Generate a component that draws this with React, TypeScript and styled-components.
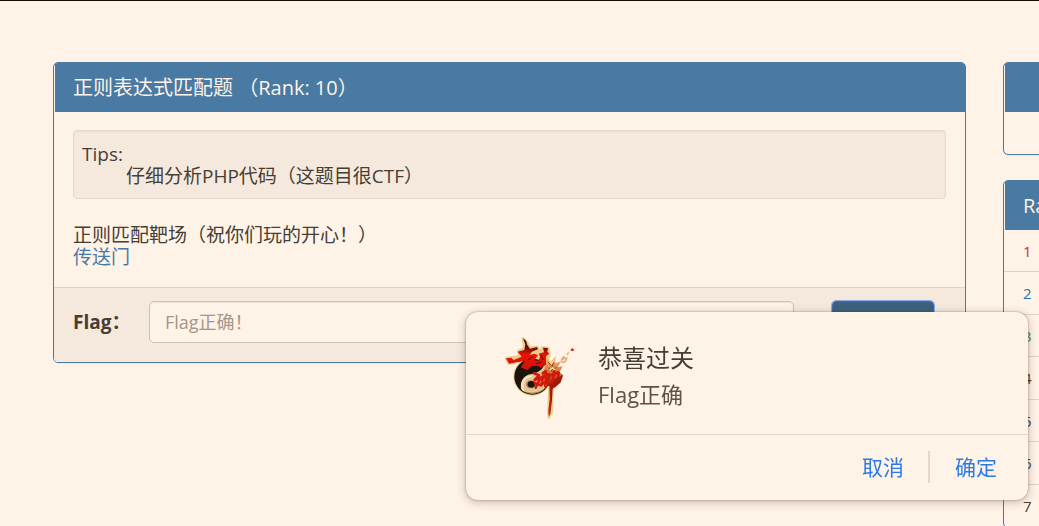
import React from "react";
import styled, { createGlobalStyle } from "styled-components";

const uiFont = `"Open Sans", "Noto Sans CJK SC", sans-serif`;

const GlobalStyle = createGlobalStyle`
  *, *::before, *::after { box-sizing: border-box; }
  body {
    margin: 0;
    background: #fff2e6;
    color: #463d34;
    font-family: ${uiFont};
    font-size: 19px;
    line-height: 22px;
    overflow: hidden;
  }
`;

const Page = styled.div`
  min-height: 100vh;
  border-top: 1px solid #1a0a04;
  padding: 61px 0 0 53px;
`;

const Columns = styled.div`
  display: grid;
  grid-template-columns: minmax(0, 1fr) 36px;
  gap: 37px;
  align-items: start;
`;

const Sidebar = styled.aside`
  display: flex;
  flex-direction: column;
  gap: 25px;
  width: 300px;
`;

const Panel = styled.section`
  border: 1px solid #487aa4;
  border-radius: 5px;
  overflow: hidden;
  box-shadow: 0 1px 1px rgba(0, 0, 0, 0.05);
`;

const PanelHeading = styled.h2`
  margin: 0 0 0 1px;
  padding: 13px 18px;
  min-height: 49px;
  background: #487aa4;
  color: #fff2e6;
  font-size: 20px;
  font-weight: 400;
  line-height: 23px;
  white-space: pre;
`;

const PanelBody = styled.div`
  min-height: 42px;
  padding: 18px 19px 19px;
`;

const Well = styled.div`
  margin-bottom: 25px;
  padding: 12px 8px 11px;
  border: 1px solid #e5d9cd;
  border-radius: 4px;
  background: #f5e9dd;
  box-shadow: inset 0 1px 1px rgba(0, 0, 0, 0.05);
`;

const Tip = styled.div`
  padding-left: 44px;
`;

const Link = styled.a`
  display: block;
  width: fit-content;
  color: #487aa4;
  text-decoration: none;
`;

const PanelFooter = styled.form`
  display: flex;
  align-items: center;
  padding: 13px 31px 19px 19px;
  border-top: 1px solid #dfd3c7;
  background: #f5e9dd;
`;

const FlagLabel = styled.label`
  flex: 0 0 76px;
  font-weight: 700;
`;

const FlagInput = styled.input`
  flex: 1;
  min-width: 0;
  height: 42px;
  padding: 0 15px;
  border: 1px solid #cdc1b5;
  border-radius: 5px;
  background: #fff2e6;
  box-shadow: inset 0 1px 1px rgba(0, 0, 0, 0.07);
  color: #463d34;
  font: 18px ${uiFont};
  &::placeholder { color: #a39789; opacity: 1; }
`;

const SubmitButton = styled.button`
  width: 102px;
  height: 42px;
  margin-left: 38px;
  border: 1px solid #4666a8;
  border-radius: 4px;
  outline: 1px solid #8da5e2;
  background: #3c617f;
  color: #fff2e6;
  font: 18px ${uiFont};
`;

const RankTable = styled.table`
  width: 100%;
  border-collapse: separate;
  border-spacing: 0;
  font-size: 15px;
  line-height: 20px;
`;

const RankRow = styled.tr`
  height: 42px;
  &:nth-child(even) { height: 43px; }
`;

const RankCell = styled.td<{ $color: string }>`
  padding: 0 19px;
  border-bottom: 1px solid #dfd3c7;
  color: ${(p) => p.$color};
`;

const Dialog = styled.div`
  position: fixed;
  right: 11px;
  bottom: 26px;
  width: 562px;
  max-width: calc(100vw - 22px);
  border-radius: 12px;
  background: #fff2e6;
  box-shadow: 0 0 2px rgba(70, 50, 30, 0.5), 0 2px 10px rgba(70, 50, 30, 0.3);
`;

const DialogContent = styled.div`
  display: flex;
  gap: 13px;
  height: 122px;
  padding: 13px 29px;
`;

const Emblem = styled.svg`
  flex: 0 0 90px;
  height: 100px;
`;

const DialogText = styled.div`
  padding-top: 15px;
`;

const DialogTitle = styled.h3`
  margin: 0;
  font-size: 24px;
  font-weight: 400;
  line-height: 36px;
`;

const DialogMessage = styled.p`
  margin: 0;
  color: #5d5247;
  font-size: 22px;
  line-height: 36px;
`;

const DialogActions = styled.div`
  display: flex;
  justify-content: flex-end;
  align-items: center;
  height: 66px;
  padding: 0 31px 2px;
  border-top: 1px solid #e1d6ca;
`;

const DialogButton = styled.button`
  padding: 0;
  border: 0;
  background: none;
  color: #2c7be5;
  font: 21px/32px ${uiFont};
  & + & {
    margin-left: 24px;
    padding-left: 25px;
    border-left: 2px solid #e5d9cd;
  }
`;

const ranks = [
  { place: 1, color: "#d02a3a" },
  { place: 2, color: "#2c74aa" },
  { place: 3, color: "#3c8a4a" },
  { place: 4, color: "#463d34" },
  { place: 5, color: "#463d34" },
  { place: 6, color: "#463d34" },
  { place: 7, color: "#463d34" },
];

function TaijiEmblem() {
  return (
    <Emblem viewBox="0 0 270 300" aria-hidden="true">
      <defs>
        <linearGradient id="brush" gradientUnits="userSpaceOnUse" x1="0" y1="42" x2="0" y2="135">
          <stop offset="0" stopColor="#2a0500" />
          <stop offset="0.3" stopColor="#7c0a04" />
          <stop offset="0.5" stopColor="#ea1407" />
          <stop offset="1" stopColor="#d01207" />
        </linearGradient>
        <linearGradient id="flame" x1="0" y1="0" x2="0" y2="1">
          <stop offset="0" stopColor="#f3c27c" />
          <stop offset="0.5" stopColor="#cf7a3c" />
          <stop offset="1" stopColor="#8f1206" />
        </linearGradient>
        <linearGradient id="stem" x1="0" y1="0" x2="1" y2="0">
          <stop offset="0" stopColor="#d92b0c" />
          <stop offset="1" stopColor="#8a1004" />
        </linearGradient>
        <clipPath id="disc">
          <circle cx="112" cy="155" r="51" />
        </clipPath>
      </defs>
      <g stroke="#e8cf8e" strokeWidth="8" strokeLinejoin="round" fill="#e8cf8e">
        <circle cx="112" cy="155" r="53" />
        <path d="M84 40L98 56L104 68L126 66L134 80L142 68L160 70L163 92L150 118L100 136L78 128L85 108L42 116L34 100L74 94L70 78L88 70Z" />
        <path d="M163 190L174 190L170 262L162 278L160 262Z" strokeWidth="7" />
      </g>
      <circle cx="112" cy="155" r="54" fill="#1c130c" />
      <g clipPath="url(#disc)">
        <path d="M84 206C70 182 79 153 106 148C132 144 148 132 151 105L180 120L176 214Z" fill="#eac497" />
        <path d="M88 204C74 178 86 155 110 154" fill="none" stroke="#fbe3c0" strokeWidth="6" />
        <path d="M72 192Q108 218 152 192" fill="none" stroke="#8c7a60" strokeWidth="4" />
      </g>
      <ellipse cx="107" cy="178" rx="14" ry="12" fill="#a88462" />
      <ellipse cx="109" cy="178" rx="11" ry="10" fill="#1c130c" />
      <path d="M155 96L167 110L178 99L183 94L180 114L198 110L188 126L203 124L193 142L205 151L197 171L180 187L158 183L145 150Z" fill="url(#flame)" />
      <path d="M160 112L170 122M176 112L168 134L184 128M160 128L176 144L190 140" fill="none" stroke="#8e3a1c" strokeWidth="3" />
      <path d="M163 104L169 116L178 104M164 136L172 128L181 136" fill="none" stroke="#fbdba0" strokeWidth="4" />
      <path d="M197 112Q196 99 208 91Q207 101 217 95Q219 110 205 115ZM213 88L223 79L219 91Z" fill="#e6ad78" />
      <path d="M202 108L211 104" stroke="#fff0d0" strokeWidth="4" />
      <path d="M226 75L232 69L238 76L231 79Z" fill="#c52b1b" />
      <path d="M84 40L93 47L97 60L105 71L126 66L129 73L111 80L104 90L119 86L129 91L118 105L130 108L135 95L131 86L147 82L144 68L159 69L157 80L163 86L153 94L153 119L137 128L128 122L110 124L97 136L77 127L90 108L64 112L42 116L33 100L49 98L56 105L80 95L68 80L88 75L91 58Z" fill="url(#brush)" />
      <g fill="none" stroke="#5c0a04" strokeLinejoin="round" strokeLinecap="round" strokeWidth="3">
        <path d="M100 104L112 96M124 116L138 112M139 92L144 104" />
      </g>
      <g fill="none" stroke="#d31808" strokeLinejoin="round" strokeLinecap="round" strokeWidth="8">
        <path d="M117 145L132 151L119 165L137 158L122 188M119 174L139 181" />
        <path d="M143 145L151 139M141 155L163 148L158 170L140 176L144 157M153 140L151 184M167 151L191 143L188 164L169 171M178 139L170 190" />
      </g>
      <path d="M182 161L203 151L196 173L177 190L166 181Z" fill="#a81809" />
      <path d="M163 181L173 184L171 225L166 267L161 275L160 257L164 222Z" fill="url(#stem)" />
    </Emblem>
  );
}

export default function App() {
  return (
    <>
      <GlobalStyle />
      <Page>
        <Columns>
          <Panel>
            <PanelHeading>{"正则表达式匹配题 （Rank: 10）"}</PanelHeading>
            <PanelBody>
              <Well>
                Tips:
                <Tip>仔细分析PHP代码（这题目很CTF）</Tip>
              </Well>
              <div>正则匹配靶场（祝你们玩的开心！）</div>
              <Link href="#">传送门</Link>
            </PanelBody>
            <PanelFooter onSubmit={(e) => e.preventDefault()}>
              <FlagLabel htmlFor="flag">Flag：</FlagLabel>
              <FlagInput id="flag" placeholder="Flag正确！" />
              <SubmitButton aria-label="提交" />
            </PanelFooter>
          </Panel>
          <Sidebar>
            <Panel>
              <PanelHeading />
              <PanelBody />
            </Panel>
            <Panel>
              <PanelHeading>Rank</PanelHeading>
              <RankTable>
                <tbody>
                  {ranks.map((r) => (
                    <RankRow key={r.place}>
                      <RankCell $color={r.color}>{r.place}</RankCell>
                    </RankRow>
                  ))}
                </tbody>
              </RankTable>
            </Panel>
          </Sidebar>
        </Columns>
      </Page>
      <Dialog role="dialog" aria-labelledby="dialog-title">
        <DialogContent>
          <TaijiEmblem />
          <DialogText>
            <DialogTitle id="dialog-title">恭喜过关</DialogTitle>
            <DialogMessage>Flag正确</DialogMessage>
          </DialogText>
        </DialogContent>
        <DialogActions>
          <DialogButton type="button">取消</DialogButton>
          <DialogButton type="button">确定</DialogButton>
        </DialogActions>
      </Dialog>
    </>
  );
}
